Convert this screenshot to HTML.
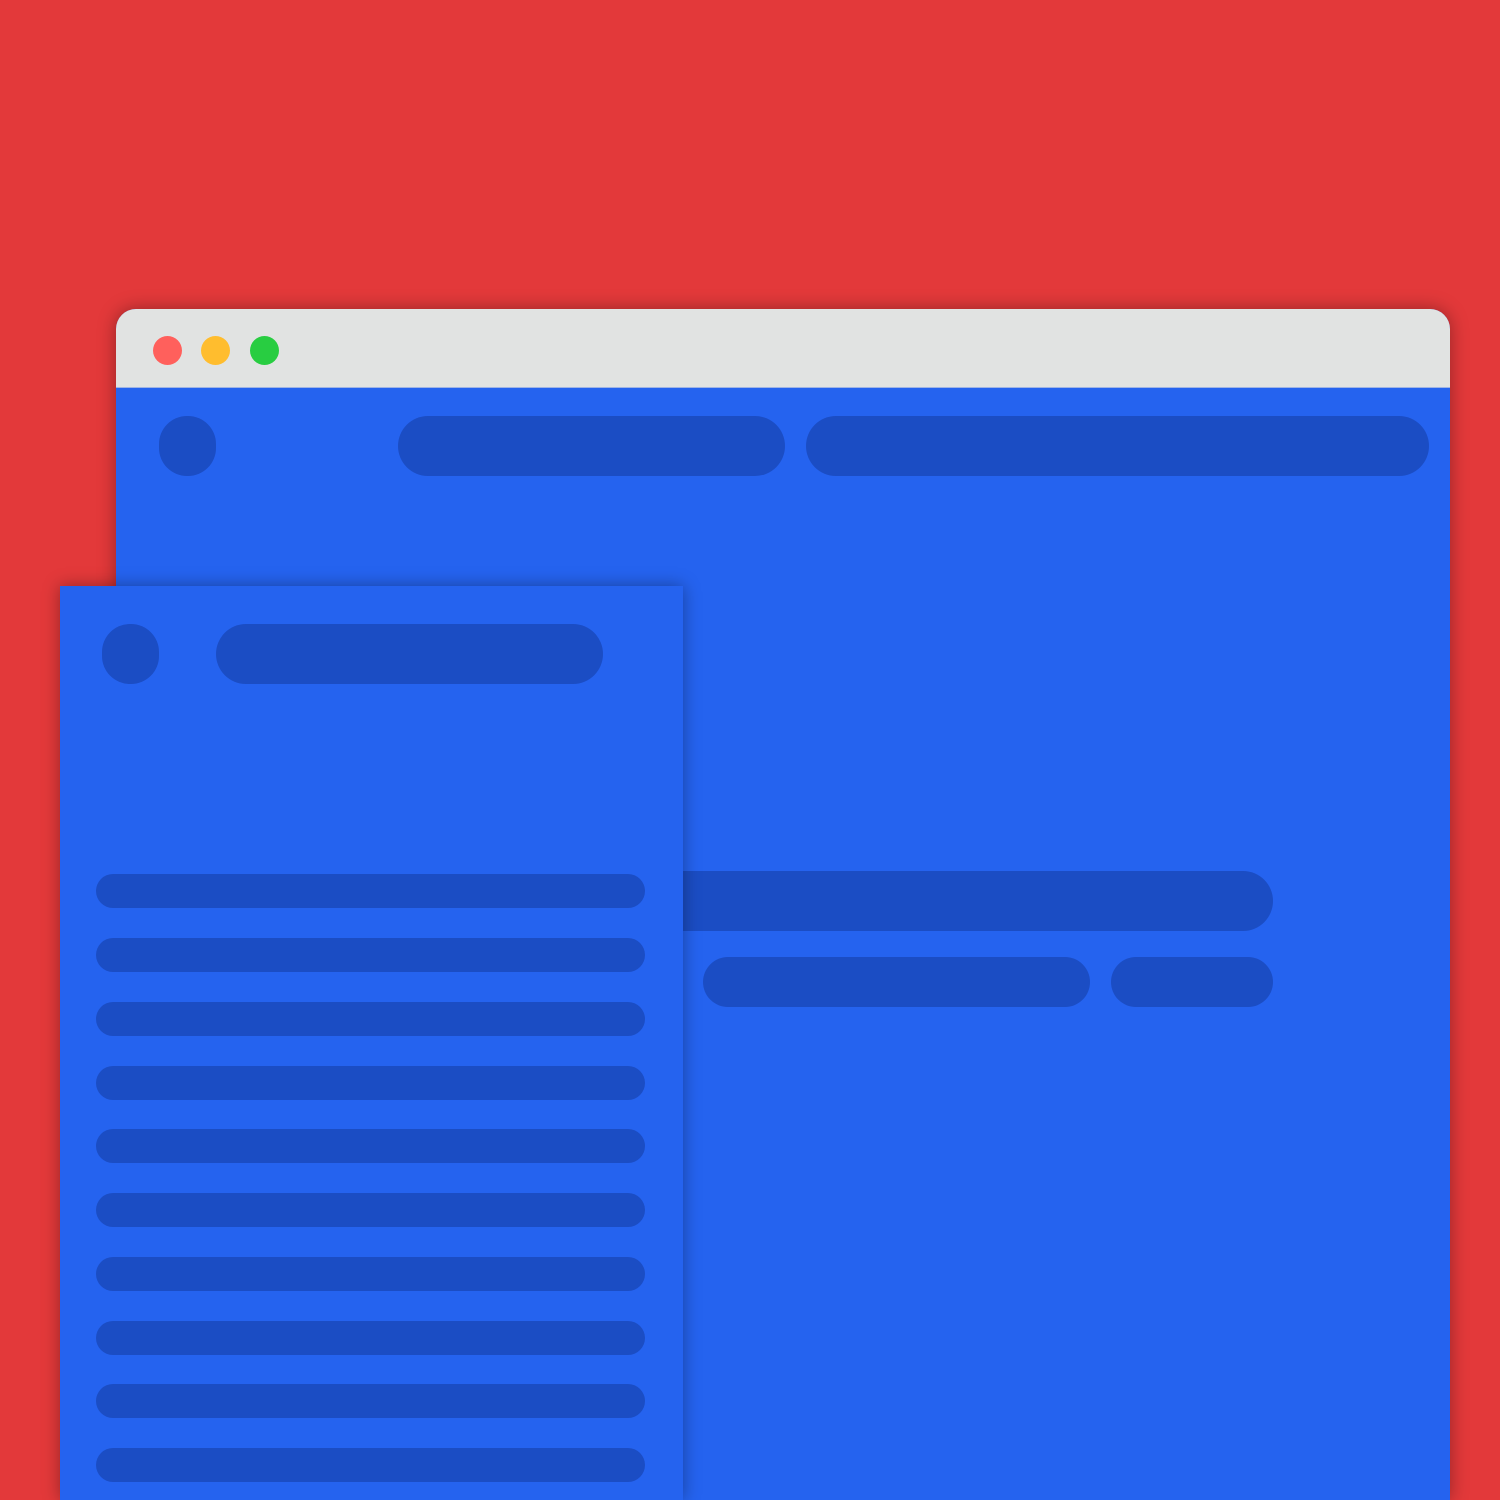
<!DOCTYPE html><html style="margin:0;width:1500px;height:1500px;overflow:hidden"><head><style>
body{margin:0;width:1500px;height:1500px;background:#e3393a;position:relative;overflow:hidden}
div{position:absolute;box-sizing:border-box}
.d{background:#1b4dc4}
</style></head><body>
<div style="left:116px;top:309px;width:1334px;height:1191px;border-radius:20px 20px 0 0;background:#2563ef;overflow:hidden;box-shadow:0 0 18px rgba(0,0,0,.35)">
<div style="left:0;top:0;width:1334px;height:79px;background:#e1e3e2;border-bottom:1px solid #9fb4e4"></div>
<div style="left:37px;top:27px;width:29px;height:29px;border-radius:50%;background:#ff605c"></div>
<div style="left:85px;top:27px;width:29px;height:29px;border-radius:50%;background:#ffbd2e"></div>
<div style="left:134px;top:27px;width:29px;height:29px;border-radius:50%;background:#28cd41"></div>
<div class="d" style="left:43px;top:107px;width:57px;height:60px;border-radius:28px"></div>
<div class="d" style="left:282px;top:107px;width:387px;height:60px;border-radius:30px"></div>
<div class="d" style="left:690px;top:107px;width:623px;height:60px;border-radius:30px"></div>
<div class="d" style="left:400px;top:562px;width:757px;height:60px;border-radius:30px"></div>
<div class="d" style="left:587px;top:648px;width:387px;height:50px;border-radius:25px"></div>
<div class="d" style="left:995px;top:648px;width:162px;height:50px;border-radius:25px"></div>
</div>
<div style="left:60px;top:586px;width:623px;height:914px;background:#2563ef;box-shadow:0 0 16px rgba(0,0,0,.35);overflow:hidden">
<div class="d" style="left:42px;top:38px;width:57px;height:60px;border-radius:28px"></div>
<div class="d" style="left:156px;top:38px;width:387px;height:60px;border-radius:30px"></div>
<div class="d" style="left:36px;top:288px;width:549px;height:34px;border-radius:17px"></div>
<div class="d" style="left:36px;top:352px;width:549px;height:34px;border-radius:17px"></div>
<div class="d" style="left:36px;top:416px;width:549px;height:34px;border-radius:17px"></div>
<div class="d" style="left:36px;top:480px;width:549px;height:34px;border-radius:17px"></div>
<div class="d" style="left:36px;top:543px;width:549px;height:34px;border-radius:17px"></div>
<div class="d" style="left:36px;top:607px;width:549px;height:34px;border-radius:17px"></div>
<div class="d" style="left:36px;top:671px;width:549px;height:34px;border-radius:17px"></div>
<div class="d" style="left:36px;top:735px;width:549px;height:34px;border-radius:17px"></div>
<div class="d" style="left:36px;top:798px;width:549px;height:34px;border-radius:17px"></div>
<div class="d" style="left:36px;top:862px;width:549px;height:34px;border-radius:17px"></div>
</div>
</body></html>
